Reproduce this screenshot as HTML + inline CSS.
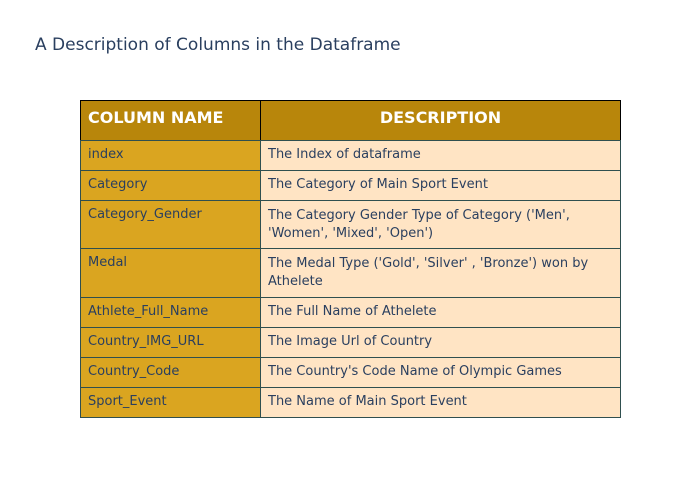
<!DOCTYPE html>
<html><head><style>
body{margin:0;width:700px;height:500px;background:#fff;position:relative;font-family:"DejaVu Sans",Verdana,sans-serif;overflow:hidden}
.t{position:absolute;left:35px;top:35px;font-size:17px;color:#2a3f5f;white-space:nowrap}
.c{position:absolute;box-sizing:border-box;font-size:13px;color:#2a3f5f;line-height:20px;padding:4px 7px;white-space:nowrap}
.a{left:80px;width:181px;background:#daa520;border:1px solid #2f4f4f}
.b{left:260px;width:361px;background:#ffe4c4;border:1px solid #2f4f4f}
.h{background:#b8860b;border:1px solid #000;color:#fff;font-weight:bold;font-size:16px;line-height:32px;padding-top:1px}
</style></head><body>
<div class="t">A Description of Columns in the Dataframe</div>
<div class="c a h" style="top:100px;height:41px">COLUMN NAME</div>
<div class="c b h" style="top:100px;height:41px;text-align:center;background:#b8860b">DESCRIPTION</div>

<div class="c a" style="top:140px;height:31px">index</div>
<div class="c b" style="top:140px;height:31px">The Index of dataframe</div>
<div class="c a" style="top:170px;height:31px">Category</div>
<div class="c b" style="top:170px;height:31px">The Category of Main Sport Event</div>
<div class="c a" style="top:200px;height:49px">Category_Gender</div>
<div class="c b" style="top:200px;height:49px;line-height:18px;padding-top:6px">The Category Gender Type of Category ('Men',<br>'Women', 'Mixed', 'Open')</div>
<div class="c a" style="top:248px;height:50px">Medal</div>
<div class="c b" style="top:248px;height:50px;line-height:18px;padding-top:6px">The Medal Type ('Gold', 'Silver' , 'Bronze') won by<br>Athelete</div>
<div class="c a" style="top:297px;height:31px">Athlete_Full_Name</div>
<div class="c b" style="top:297px;height:31px">The Full Name of Athelete</div>
<div class="c a" style="top:327px;height:31px">Country_IMG_URL</div>
<div class="c b" style="top:327px;height:31px">The Image Url of Country</div>
<div class="c a" style="top:357px;height:31px">Country_Code</div>
<div class="c b" style="top:357px;height:31px">The Country's Code Name of Olympic Games</div>
<div class="c a" style="top:387px;height:31px">Sport_Event</div>
<div class="c b" style="top:387px;height:31px">The Name of Main Sport Event</div>
</body></html>
